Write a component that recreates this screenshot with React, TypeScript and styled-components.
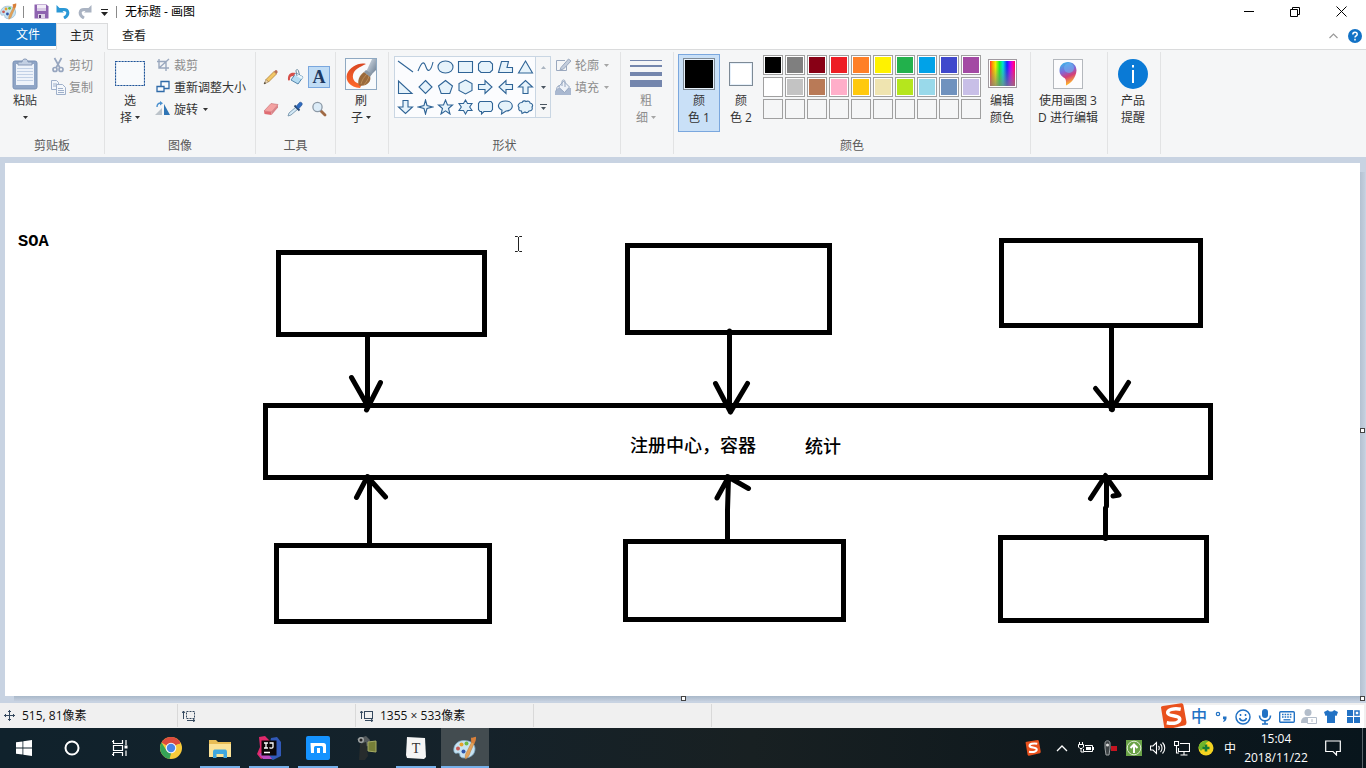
import React from "react";
import styled, { createGlobalStyle, css } from "styled-components";

const GlobalStyle = createGlobalStyle`
  *, *::before, *::after { box-sizing: border-box; }
  html, body { margin: 0; height: 100%; }
  body {
    font-family: "Open Sans", "Noto Sans CJK SC", sans-serif;
    font-size: 12px;
    line-height: 17px;
    color: #222;
  }
  #root { height: 100%; }
  button {
    font: inherit;
    color: inherit;
    background: none;
    border: 0;
    padding: 0;
    margin: 0;
  }
  svg { display: block; flex: none; }
`;

const Screen = styled.div`
  display: flex;
  flex-direction: column;
  min-height: 100%;
  overflow: hidden;
`;

/* ---------- title bar ---------- */

const TitleBar = styled.header`
  display: flex;
  align-items: center;
  height: 23px;
  background: #fff;
`;

const QuickAccess = styled.div`
  display: flex;
  align-items: center;
  gap: 4px;
`;

const QuickButton = styled.button<{ $narrow?: boolean }>`
  display: flex;
  align-items: center;
  justify-content: center;
  width: ${(p) => (p.$narrow ? 12 : 18)}px;
  height: 20px;
`;

const TitleDivider = styled.span`
  width: 1px;
  height: 12px;
  margin: 0 8px 0 2px;
  background: #8a8a8a;
`;

const Title = styled.h1`
  margin: 0;
  font-size: 12px;
  font-weight: 400;
  color: #000;
`;

const WindowButtons = styled.div`
  display: flex;
  margin-left: auto;
  padding-right: 2px;
`;

const WindowButton = styled.button`
  display: flex;
  align-items: center;
  justify-content: center;
  width: 46px;
  height: 22px;
`;

/* ---------- tabs ---------- */

const TabBar = styled.nav`
  display: flex;
  height: 27px;
  background: #fff;
  border-bottom: 1px solid #dadbdc;
`;

const FileTab = styled.button`
  width: 56px;
  height: 23px;
  color: #fff;
  background: #1979ca;
`;

const Tab = styled.button<{ $active?: boolean }>`
  width: 52px;
  height: 27px;
  padding-bottom: 3px;
  border: 1px solid transparent;
  ${(p) =>
    p.$active &&
    css`
      background: #f5f6f7;
      border-color: #dadbdc #dadbdc transparent;
    `}
`;

const TabTools = styled.div`
  display: flex;
  align-items: center;
  gap: 10px;
  margin-left: auto;
  padding-right: 4px;
`;

/* ---------- ribbon ---------- */

const Ribbon = styled.section`
  display: flex;
  height: 107px;
  padding: 2px 0 3px;
  background: #f5f6f7;
`;

const GroupBox = styled.div<{ $width: number }>`
  display: flex;
  flex-direction: column;
  flex: none;
  width: ${(p) => p.$width}px;
  padding-top: 2px;
  border-right: 1px solid #e2e3e4;
`;

const GroupBody = styled.div`
  display: flex;
  flex: 1;
  align-items: flex-start;
  padding: 0 4px;
`;

const GroupLabel = styled.div`
  height: 17px;
  text-align: center;
  color: #5a5a5a;
`;

const BigButton = styled.button<{ $wide?: boolean; $selected?: boolean; $disabled?: boolean }>`
  display: flex;
  flex-direction: column;
  align-items: center;
  flex: none;
  width: ${(p) => (p.$wide ? 66 : 42)}px;
  height: 78px;
  border: 1px solid transparent;
  white-space: nowrap;
  color: ${(p) => (p.$disabled ? "#8d8d8d" : "#333")};
  ${(p) =>
    p.$selected &&
    css`
      background: #c9e0f7;
      border-color: #7aa7de;
    `}
`;

const BigIcon = styled.span`
  display: flex;
  align-items: center;
  justify-content: center;
  height: 37px;
  flex: none;
`;

const ButtonLine = styled.span`
  display: flex;
  align-items: center;
  justify-content: center;
  gap: 3px;
  height: 17px;
`;

const SmallColumn = styled.div`
  display: flex;
  flex-direction: column;
  align-items: flex-start;
  padding-left: 4px;
`;

const SmallButton = styled.button<{ $disabled?: boolean }>`
  display: flex;
  align-items: center;
  gap: 3px;
  height: 22px;
  white-space: nowrap;
  color: ${(p) => (p.$disabled ? "#8d8d8d" : "#333")};
`;

const SmallCaret = styled.span`
  padding-left: 2px;
`;

const ToolGrid = styled.div`
  display: grid;
  grid-template-columns: repeat(3, 22px);
  grid-auto-rows: 22px;
  gap: 10px 2px;
  padding-top: 12px;
`;

const ToolButton = styled.button<{ $selected?: boolean }>`
  display: flex;
  align-items: center;
  justify-content: center;
  border: 1px solid ${(p) => (p.$selected ? "#7aa7de" : "transparent")};
  background: ${(p) => (p.$selected ? "#c0dcf5" : "none")};
`;

const LetterTool = styled.span`
  font-family: "Liberation Serif", serif;
  font-size: 18px;
  line-height: 20px;
  font-weight: 700;
  color: #1d3a63;
`;

const Gallery = styled.div`
  display: flex;
  margin: 2px 4px 0 1px;
  border: 1px solid #c9d6e3;
  background: #fbfcfe;
`;

const ShapeGrid = styled.div`
  display: grid;
  grid-template-columns: repeat(7, 20px);
  grid-auto-rows: 20px;
`;

const ShapeButton = styled.button`
  display: flex;
  align-items: center;
  justify-content: center;
`;

const GalleryScroll = styled.div`
  display: flex;
  flex-direction: column;
  width: 15px;
  border-left: 1px solid #c9d6e3;
  background: #f5f6f7;
`;

const ScrollButton = styled.button`
  display: flex;
  flex: 1;
  align-items: center;
  justify-content: center;
`;

const Swatch = styled.span<{ $color: string; $large?: boolean }>`
  width: ${(p) => (p.$large ? 32 : 24)}px;
  height: ${(p) => (p.$large ? 32 : 24)}px;
  border: 1px solid #7d8a96;
  background: ${(p) => p.$color};
  box-shadow: inset 0 0 0 1px #e6f0fa;
`;

const Palette = styled.div`
  display: grid;
  grid-template-columns: repeat(10, 20px);
  grid-auto-rows: 20px;
  gap: 2px;
  padding: 1px 0 0 1px;
`;

const PaletteColor = styled.button<{ $color?: string }>`
  border: 1px solid #a0a0a0;
  background: ${(p) => p.$color || "#f5f6f7"};
  box-shadow: inset 0 0 0 1px ${(p) => (p.$color ? "#fff" : "#f5f6f7")};
`;

const Spectrum = styled.span`
  width: 29px;
  height: 29px;
  border: 1px solid #a09aa0;
  padding: 1px;
  background:
    linear-gradient(to bottom, rgba(128, 128, 128, 0) 20%, rgba(128, 128, 128, 0.75)) content-box,
    linear-gradient(to right, #f33, #f90 10%, #ee0 22%, #1e3 38%, #0dd 52%, #12f 68%, #a0f 80%, #f0a 92%, #f05) content-box,
    #fff;
`;

/* ---------- workspace ---------- */

const Workspace = styled.main`
  display: flex;
  flex: 1;
  padding: 6px 6px 7px 5px;
  background: #c8d3e2;
`;

const Paper = styled.div`
  position: relative;
  flex: 1;
  background: #fff;
  &::before {
    content: "";
    position: absolute;
    left: 9px;
    right: -4px;
    bottom: -5px;
    height: 5px;
    background: linear-gradient(#a9b8c9, #c4cfde);
  }
  &::after {
    content: "";
    position: absolute;
    top: 9px;
    bottom: 0;
    right: -5px;
    width: 5px;
    background: linear-gradient(to right, #b4c1d1, #c4cfde);
  }
`;

const Drawing = styled.svg`
  position: absolute;
  inset: 0;
  width: 100%;
  height: 100%;
`;

const Handle = styled.span<{ $edge: "right" | "bottom" | "corner" }>`
  position: absolute;
  z-index: 1;
  width: 5px;
  height: 5px;
  background: #fff;
  border: 1px solid #444;
  right: ${(p) => (p.$edge === "bottom" ? "calc(50% - 3px)" : "-5px")};
  bottom: ${(p) => (p.$edge === "right" ? "calc(50% - 3px)" : "-5px")};
`;

/* ---------- status bar ---------- */

const StatusBar = styled.footer`
  display: flex;
  align-items: stretch;
  height: 25px;
  background: #f0f0f0;
  color: #111;
`;

const StatusCell = styled.div`
  display: flex;
  align-items: center;
  gap: 6px;
  width: 178px;
  padding-left: 4px;
  margin: 1px 0;
  border-right: 1px solid #d9d9d9;
`;

const ImeBar = styled.div`
  display: flex;
  align-items: center;
  margin: 2px 2px 0 auto;
  background: linear-gradient(to right, transparent 20px, #fff 20px);
`;

const ImeButton = styled.button<{ $logo?: boolean }>`
  display: flex;
  align-items: center;
  justify-content: center;
  width: ${(p) => (p.$logo ? 30 : 22)}px;
  height: 23px;
  font-size: 16px;
  font-weight: 500;
  color: #2272c4;
`;

/* ---------- taskbar ---------- */

const Taskbar = styled.nav`
  display: flex;
  height: 40px;
  background: linear-gradient(to right, #10222c, #15222a 35%, #182022 55%, #0e181d 80%, #08151c);
  color: #fff;
`;

const TaskGroup = styled.div<{ $gap: number }>`
  display: flex;
  gap: ${(p) => p.$gap}px;
  margin-right: 3px;
`;

const TaskButton = styled.button<{ $open?: boolean; $active?: boolean }>`
  display: flex;
  align-items: center;
  justify-content: center;
  width: 48px;
  height: 40px;
  background: ${(p) => (p.$active ? "#434c50" : "none")};
  ${(p) =>
    (p.$open || p.$active) &&
    css`
      background-image: linear-gradient(#76b0ea, #76b0ea);
      background-repeat: no-repeat;
      background-position: bottom center;
      background-size: ${p.$active ? "48px" : "40px"} 2px;
    `}
`;

const Tray = styled.div`
  display: flex;
  align-items: center;
  margin-left: auto;
`;

const TrayButton = styled.button<{ $first?: boolean }>`
  display: flex;
  align-items: center;
  justify-content: center;
  width: 24px;
  height: 40px;
  margin-right: ${(p) => (p.$first ? 5 : 0)}px;
`;

const Clock = styled.button`
  width: 68px;
  height: 40px;
  text-align: center;
  line-height: 19px;
  white-space: nowrap;
`;

const Notifications = styled(TrayButton)`
  width: 46px;
`;

const ShowDesktop = styled.button`
  width: 4px;
  height: 40px;
  margin-left: 6px;
  border-left: 1px solid #59646a;
`;

/* ---------- icons ---------- */

const Caret = ({ up, color = "#333" }: { up?: boolean; color?: string }) => (
  <svg width="5" height="3" viewBox="0 0 5 3" fill={color}>
    <path d={up ? "M0 3h5L2.500 0z" : "M0 0h5L2.500 3z"} />
  </svg>
);

const PaintIcon = ({ size = 17 }: { size?: number }) => (
  <svg width={size} height={size} viewBox="0 0 24 24">
    <path
      d="M11 4.500C4.500 4.500.5 9 .8 14.500c.2 3 2.200 3 3.600 2.600 1.500-.4 2.500.4 2.400 2 0 1.700 1.500 3 5.200 2.900 6.500-.2 10-4.200 10-9.300 0-5-4.800-8.200-11-8.200z"
      fill="#c7e3f2" stroke="#7fa9c4" strokeWidth=".8"
    />
    <circle cx="5" cy="12.500" r="2" fill="#c95a55" />
    <circle cx="8.500" cy="8.500" r="2" fill="#e6a22b" />
    <circle cx="13.500" cy="7.500" r="2" fill="#6dbb45" />
    <circle cx="10.500" cy="15.500" r="2" fill="#2f55a8" />
    <path d="M12.500 23c-.8-3 .2-6 2-8.500L19 5.500l2.500 1.200-4.200 9.300c-.8 3-2 5.500-4.800 7z" fill="#e2a25a" stroke="#b97a3a" strokeWidth=".5" />
    <path d="M18 1.500c2 .8 3-.8 5-.8.2 3-.5 5-2 7l-2.800-1.400z" fill="#d9803a" />
  </svg>
);

const SaveIcon = () => (
  <svg width="15" height="15" viewBox="0 0 15 15">
    <path d="M.5.5h12l2 2v12H.5z" fill="#8e63b0" />
    <path d="M3 1h9v6H3z" fill="#f2ecf7" />
    <path d="M3 4h9v3H3z" fill="#d9cbe6" />
    <path d="M4 10h7v4.500H4z" fill="#dcd3e6" />
    <path d="M5 11h2v3H5z" fill="#5d3f7a" />
  </svg>
);

const UndoIcon = ({ redo }: { redo?: boolean }) => (
  <svg width="14" height="14" viewBox="0 0 14 14">
    <g transform={redo ? "matrix(-1 0 0 1 14 0)" : undefined}>
      <path d="M2 4.500h5c6-.5 6.500 5.500 1 8.500" fill="none" stroke={redo ? "#aab3c2" : "#2b98d6"} strokeWidth="3" />
      <path d="M.5 0v7.500H8z" fill={redo ? "#aab3c2" : "#2b98d6"} />
    </g>
  </svg>
);

const PasteIcon = () => (
  <svg width="26" height="32" viewBox="0 0 26 32">
    <rect x="1" y="3" width="24" height="28" rx="2" fill="#8fa5c6" stroke="#7b92b6" />
    <rect x="4" y="6" width="18" height="21" fill="#eef3fa" />
    <path d="M5 10.500h16M5 13.500h16M5 16.500h16M5 19.500h16M5 22.500h16" stroke="#c2d1e6" />
    <path d="M6 7V4h4c0-4 6-4 6 0h4v3z" fill="#c3d0e3" stroke="#8699b7" />
  </svg>
);

const CutIcon = () => (
  <svg width="16" height="16" viewBox="0 0 16 16" fill="none" stroke="#97a6bf" strokeWidth="1.700">
    <path d="M4.500 1l5.500 10M11.500 1L6 11" />
    <circle cx="5" cy="12.500" r="2" />
    <circle cx="11" cy="12.500" r="2" />
  </svg>
);

const CopyIcon = () => (
  <svg width="16" height="16" viewBox="0 0 16 16" fill="#f4f7fb" stroke="#9fb0ca">
    <path d="M1.500 1.500h5l2 2v7h-7z" />
    <path d="M3 5h4M3 7h4" />
    <path d="M6.500 5.500h6l3 3v7h-9z" />
    <path d="M8 9.500h5M8 11.500h6M8 13.500h6" />
  </svg>
);

const SelectIcon = () => (
  <svg width="30" height="25" viewBox="0 0 30 25">
    <rect x=".5" y=".5" width="29" height="24" fill="#f8fafc" stroke="#1f5499" strokeWidth="1.200" strokeDasharray="2.200 .8" />
  </svg>
);

const CropIcon = () => (
  <svg width="16" height="16" viewBox="0 0 16 16" fill="none" stroke="#9aa8be" strokeWidth="1.400">
    <path d="M4 2v9h10M2 4.500h9V14M4 11L14 2" />
  </svg>
);

const ResizeIcon = () => (
  <svg width="16" height="16" viewBox="0 0 16 16" fill="#f8fbfe" stroke="#2f6aa8" strokeWidth="1.300">
    <path d="M6 2.500h8v7H6z" />
    <path d="M2 7.500h7v5H2z" />
  </svg>
);

const RotateIcon = () => (
  <svg width="16" height="16" viewBox="0 0 16 16">
    <path d="M7 7v7H0z" fill="#bcc3ca" />
    <path d="M9 3v11h6z" fill="#2f75b5" />
    <path d="M2 6c0-3 2-4 4-4" fill="none" stroke="#4a90cf" strokeWidth="1.400" />
    <path d="M5 0l3 2.200L5 4.500z" fill="#4a90cf" />
  </svg>
);

const PencilIcon = () => (
  <svg width="16" height="16" viewBox="0 0 16 16">
    <path d="M3 10.500L11 2.500l2.500 2.500-8 8z" fill="#f2c766" stroke="#a9792e" strokeWidth=".7" />
    <path d="M11 2.500l1.500-1.300c1-.5 2.500 1 2 2L13.500 5z" fill="#b86f55" />
    <path d="M3 10.500L1 15l4.500-2z" fill="#e9d4b0" stroke="#8b6a3e" strokeWidth=".5" />
    <path d="M1 15l.8-2 1.200 1.200z" fill="#222" />
  </svg>
);

const BucketIcon = ({ dim }: { dim?: boolean }) => (
  <svg width="17" height="16" viewBox="0 0 17 16">
    {dim ? (
      <>
        <path d="M0 12l3-3h13v7H0z" fill="#a9b8d0" />
        <path d="M8.500 2l6 6-5 5.500-6-5.500z" fill="#eef2f8" stroke="#94a5bf" />
        <path d="M7 7V2.500c0-2 3-2 3 0V8" fill="none" stroke="#94a5bf" />
        <path d="M5 7C3 6 1.500 8 1.500 11.500" fill="none" stroke="#94a5bf" />
      </>
    ) : (
      <>
        <path d="M9 4l7 4-5 7-7-4z" fill="#b5dcf2" stroke="#5586ac" />
        <path d="M9 4l7 4-1.500 2-7-4z" fill="#e8f5fc" />
        <path d="M10 7l-1-5c0-2 2-2 2.500 0l1 4" fill="none" stroke="#6f8ca2" />
        <path d="M8.500 4C4 3 .5 4.500 1 11c1 1 2 .5 2-1 0-2 1-3 3.500-3z" fill="#d6504a" />
      </>
    )}
  </svg>
);

const EraserIcon = () => (
  <svg width="16" height="16" viewBox="0 0 16 16">
    <path d="M1 10L8 2.500l7 1L8.500 11z" fill="#f4a2a2" stroke="#c46a6e" strokeWidth=".6" />
    <path d="M1 10l7.500 1v3L1.500 13z" fill="#e06c72" />
    <path d="M8.500 11L15 3.500v3L8.500 14z" fill="#d88388" />
  </svg>
);

const PickerIcon = () => (
  <svg width="16" height="16" viewBox="0 0 16 16">
    <path d="M9 6l2 2-7 6-3 1 1-3z" fill="#d4e9f6" stroke="#6b8ba5" strokeWidth=".8" />
    <path d="M7.500 4.500l5 5" stroke="#27456e" strokeWidth="1.800" />
    <path d="M9 5.500L12.500 1.500c1.500-1 3.500.8 2.500 2.500L11.500 8z" fill="#2f6cc0" stroke="#234f91" strokeWidth=".6" />
  </svg>
);

const ZoomIcon = () => (
  <svg width="16" height="16" viewBox="0 0 16 16">
    <path d="M9.500 9.500L14 14" stroke="#a06a45" strokeWidth="2.800" strokeLinecap="round" />
    <circle cx="6.500" cy="6" r="4.600" fill="#dcecf8" stroke="#8c99a6" strokeWidth="1.300" />
  </svg>
);

const BrushIcon = () => (
  <svg width="32" height="32" viewBox="0 0 32 32">
    <defs>
      <linearGradient id="handle" x1="0" y1="0" x2="1" y2="1">
        <stop offset="0" stopColor="#dfe7ef" />
        <stop offset="1" stopColor="#66788c" />
      </linearGradient>
      <linearGradient id="stroke" x1="0" y1="0" x2="0" y2="1">
        <stop offset="0" stopColor="#d94722" />
        <stop offset="1" stopColor="#ff6a2c" />
      </linearGradient>
    </defs>
    <rect x=".5" y=".5" width="31" height="31" fill="#f8fafc" stroke="#8fa9c2" />
    <path d="M21 6C14 4 5 9 2 16c-2 7 3 13 13 14l2-4c-6 0-10-4-9-9C9 11 15 9 21 6z" fill="url(#stroke)" />
    <path d="M27 1h4v11l-6 6-4-4z" fill="url(#handle)" />
    <path d="M19 14l6 4c2 6-4 11-11 9.500-2-4 0-10 5-13.500z" fill="#9a6a3c" />
    <path d="M16 26c1-4 3-7 6-10M19 27c2-3 4-5 5-9" fill="none" stroke="#c4935c" strokeWidth=".8" />
    <path d="M19 14l2-2 6 4-2 3z" fill="#8b98a5" />
  </svg>
);

const OutlineIcon = () => (
  <svg width="17" height="16" viewBox="0 0 17 16" fill="none" stroke="#9aa8be">
    <path d="M10 3.500H1.500v10h10V9" />
    <path d="M6 10.500L13.500 2 16 4 8.500 12 5 13z" fill="#c3cddc" />
  </svg>
);

const ThicknessIcon = () => (
  <svg width="32" height="28" viewBox="0 0 32 28" fill="#7486ad">
    <path d="M0 0h32v1H0zM0 5h32v2H0zM0 12h32v4H0zM0 20h32v7H0z" />
  </svg>
);

const Paint3DIcon = () => (
  <svg width="30" height="30" viewBox="0 0 30 30">
    <defs>
      <linearGradient id="drop" x1="0" y1="0" x2=".3" y2="1">
        <stop offset="0" stopColor="#2fc4ee" />
        <stop offset=".45" stopColor="#8069d8" />
        <stop offset=".7" stopColor="#d33e78" />
        <stop offset="1" stopColor="#ffb52e" />
      </linearGradient>
    </defs>
    <rect x=".5" y=".5" width="29" height="29" fill="#fcfcfd" stroke="#b4b8bd" />
    <path d="M15 3c-5 0-8.500 3.500-8.500 8.500 0 4 2.500 6 5 7.500 2 1.500 1.500 5 1.500 7.500 5-2 10-8 10.500-15C23.500 6.500 20 3 15 3z" fill="url(#drop)" />
    <circle cx="16" cy="9" r="5" fill="#6bb8f2" opacity=".6" />
  </svg>
);

const AlertIcon = () => (
  <svg width="30" height="30" viewBox="0 0 30 30">
    <circle cx="15" cy="15" r="15" fill="#0a7ad6" />
    <path d="M14 11h2v13h-2zM14 6h2v2.500h-2z" fill="#fff" />
  </svg>
);

const shapePaths: [string, string][] = [
  ["直线", "M1 2l15 11"],
  ["曲线", "M1 12C5 2 7 2 9 8s5 4 7-5"],
  ["椭圆形", "M8.500 2c10 0 10 12 0 12s-10-12 0-12z"],
  ["矩形", "M1.500 2.500h14v11h-14z"],
  ["圆角矩形", "M4 2.500h9l2.500 2.500v6L13 13.500H4L1.500 11V5z"],
  ["多边形", "M4.500 2.500h7L10 8.500h5.500v5h-14z"],
  ["三角形", "M8.500 2l7 12h-14z"],
  ["直角三角形", "M1.500 2v12.500H15z"],
  ["菱形", "M8.500 1.500l6.500 6.500-6.500 6.500L2 8z"],
  ["五边形", "M8.500 1.500l7 5.500-2.700 7.500H4.200L1.500 7z"],
  ["六边形", "M8.500 1l6.500 3.500v7L8.500 15 2 11.500v-7z"],
  ["右箭头", "M1.500 5.500H8v-4l7 6.500-7 6.500v-4H1.500z"],
  ["左箭头", "M15.500 5.500H9v-4L2 8l7 6.500v-4h6.500z"],
  ["向上箭头", "M6 14.500V8H1.500l7-6.500 7 6.500H11v6.500z"],
  ["向下箭头", "M6 1.500V8H1.500l7 6.500 7-6.500H11V1.500z"],
  ["四角星形", "M8.500 1l1.500 5.500L15.500 8 10 9.500 8.500 15 7 9.500 1.500 8 7 6.500z"],
  ["五角星形", "M8.500 1l2 5h5l-4 3.500 1.500 5.500-4.500-3.200L4 15l1.500-5.500L1.500 6h5z"],
  ["六角星形", "M8.500 1l2 3.500H15L12.700 8l2.300 3.500h-4.500l-2 3.500-2-3.500H2L4.300 8 2 4.500h4.500z"],
  ["圆角矩形标注", "M3 2.500h11l1.500 2v6l-1.500 2H7L4.500 15v-2.500H3l-1.500-2v-6z"],
  ["椭圆形标注", "M8.500 2C17.500 2 17.500 12 9 12l-4.500 3 .5-3.800C-1 8.500 1 2 8.500 2z"],
  ["云形标注", "M5 3.500c1-2 3-2 4-1 2-1 4 0 4 1.500 3 .5 3 3 2 4 1 3-1 4-3 4-1 2-3 2-4 1l-3 1.500-.5-2.500c-3 0-3-2-2.500-3.500C0 6.500 2 3.500 5 3.500z"],
];

const ShapeIcon = ({ d, open }: { d: string; open?: boolean }) => (
  <svg width="17" height="16" viewBox="0 0 17 16" fill={open ? "none" : "#e6f3fb"} stroke="#2f6496" strokeWidth="1.100">
    <path d={d} />
  </svg>
);

const SogouLogo = ({ size }: { size: number }) => (
  <svg width={size} height={size} viewBox="0 0 28 28">
    <path d="M1 4.500Q1 3.500 3 3L22 .2Q24 0 24.300 2L27.500 20Q27.500 22.500 26 23L7 27.500Q5 27.500 4.500 26z" fill="#e9511d" />
    <path d="M21.500 6.500C14 5 7.500 7 8 10.500c.5 3.500 12 2 12.500 6 .3 4-6 5.500-13.500 4" fill="none" stroke="#fff" strokeWidth="3.600" />
  </svg>
);

/* ---------- ribbon pieces ---------- */

const Group = ({ width, label, children }: { width: number; label?: string; children: React.ReactNode }) => (
  <GroupBox $width={width}>
    <GroupBody>{children}</GroupBody>
    <GroupLabel>{label}</GroupLabel>
  </GroupBox>
);

const Big = ({
  icon, lines, caret, ...rest
}: {
  icon: React.ReactNode; lines: [string, string]; caret?: boolean;
  $wide?: boolean; $selected?: boolean; $disabled?: boolean;
}) => (
  <BigButton type="button" {...rest}>
    <BigIcon>{icon}</BigIcon>
    <ButtonLine>{lines[0]}</ButtonLine>
    <ButtonLine>
      {lines[1]}
      {caret && <Caret color={rest.$disabled ? "#a5a5a5" : "#333"} />}
    </ButtonLine>
  </BigButton>
);

const Small = ({
  icon, label, disabled, caret,
}: { icon: React.ReactNode; label: string; disabled?: boolean; caret?: boolean }) => (
  <SmallButton type="button" $disabled={disabled}>
    {icon}
    {label}
    {caret && <SmallCaret><Caret color={disabled ? "#a5a5a5" : "#333"} /></SmallCaret>}
  </SmallButton>
);

const palette: (string | undefined)[] = [
  "#000000", "#7f7f7f", "#880015", "#ed1c24", "#ff7f27", "#fff200", "#22b14c", "#00a2e8", "#3f48cc", "#a349a4",
  "#ffffff", "#c3c3c3", "#b97a57", "#ffaec9", "#ffc90e", "#efe4b0", "#b5e61d", "#99d9ea", "#7092be", "#c8bfe7",
  ...Array<undefined>(10).fill(undefined),
];

/* ---------- the drawing on the canvas ---------- */

const PEN = 5;

const Box = ({ x1, y1, x2, y2 }: { x1: number; y1: number; x2: number; y2: number }) => (
  <rect x={x1 + PEN / 2} y={y1 + PEN / 2} width={x2 - x1 - PEN} height={y2 - y1 - PEN} />
);

const SoaDiagram = () => (
  <Drawing>
    <g transform="translate(-5 -163)">
      <g fill="none" stroke="#000" strokeWidth={PEN}>
        <Box x1={276} y1={250} x2={487} y2={337} />
        <Box x1={625} y1={243} x2={832} y2={335} />
        <Box x1={999} y1={238} x2={1203} y2={328} />
        <Box x1={263} y1={403} x2={1213} y2={480} />
        <Box x1={274} y1={543} x2={492} y2={624} />
        <Box x1={623} y1={539} x2={846} y2={622} />
        <Box x1={998} y1={535} x2={1209} y2={623} />
      </g>
      <g fill="none" stroke="#000" strokeWidth={PEN} strokeLinecap="round" strokeLinejoin="round">
        <path d="M367.500 335v70M351.500 377.500l16.500 29M380.500 382.500L366.500 410" />
        <path d="M729.500 331v78M715.500 383.500L730.500 412M747.500 383.500L730.500 412" />
        <path d="M1111.500 326v80M1095.500 388.500l17 21M1128.500 382.500l-17 27" />
        <path d="M369.500 544v-64M367.500 476.500l-11 21M368.500 478l17 19" />
        <path d="M727.500 541v-31l1-32M728 478l-11 20M727.500 476.500l21 12" />
        <path d="M1105.500 538.500V508M1106.500 506v-28M1105.500 475.500l-15 23M1106.500 477.500l12.500 17.500-6 1" />
      </g>
      <g fill="#000">
        <text x="18" y="246" fontFamily="Liberation Mono, monospace" fontSize="17" fontWeight="700">SOA</text>
        <text x="630" y="452" fontFamily="Noto Sans CJK SC, sans-serif" fontSize="18" fontWeight="500">注册中心，容器</text>
        <text x="805" y="453" fontFamily="Noto Sans CJK SC, sans-serif" fontSize="18" fontWeight="500">统计</text>
      </g>
      <path d="M515 236.500h2.500l1 1 1-1h2.500M518.500 237v14M515 251.500h2.500l1-1 1 1h2.500" fill="none" stroke="#222" />
    </g>
  </Drawing>
);

export default function App() {
  return (
    <Screen>
      <GlobalStyle />
      <TitleBar>
        <QuickAccess>
          <PaintIcon />
          <TitleDivider />
        </QuickAccess>
        <QuickAccess>
          <QuickButton type="button" aria-label="保存"><SaveIcon /></QuickButton>
          <QuickButton type="button" aria-label="撤消"><UndoIcon /></QuickButton>
          <QuickButton type="button" aria-label="重做"><UndoIcon redo /></QuickButton>
          <QuickButton type="button" $narrow aria-label="自定义快速访问工具栏">
            <svg width="7" height="8" viewBox="0 0 7 8" fill="#222"><path d="M0 1h7v1H0zM0 4h7L3.500 8z" /></svg>
          </QuickButton>
          <TitleDivider />
        </QuickAccess>
        <Title>无标题 - 画图</Title>
        <WindowButtons>
          <WindowButton type="button" aria-label="最小化">
            <svg width="10" height="10" viewBox="0 0 10 10"><path d="M0 4.500h10" stroke="#000" /></svg>
          </WindowButton>
          <WindowButton type="button" aria-label="向下还原">
            <svg width="10" height="10" viewBox="0 0 10 10" fill="none" stroke="#000"><path d="M.5 2.500h7v7h-7zM2.500 2V.5h7v7H8" /></svg>
          </WindowButton>
          <WindowButton type="button" aria-label="关闭">
            <svg width="11" height="11" viewBox="0 0 11 11"><path d="M.5.5l10 10M10.500.5l-10 10" stroke="#000" /></svg>
          </WindowButton>
        </WindowButtons>
      </TitleBar>

      <TabBar>
        <FileTab type="button">文件</FileTab>
        <Tab type="button" $active>主页</Tab>
        <Tab type="button">查看</Tab>
        <TabTools>
          <button type="button" aria-label="折叠功能区">
            <svg width="9" height="6" viewBox="0 0 9 6"><path d="M.5 5l4-4 4 4" fill="none" stroke="#9a9a9a" strokeWidth="1.200" /></svg>
          </button>
          <button type="button" aria-label="帮助">
            <svg width="14" height="14" viewBox="0 0 14 14">
              <circle cx="7" cy="7" r="7" fill="#1272c6" />
              <path d="M4.800 5.500c0-3 4.400-3 4.400-.3 0 1.600-2.200 1.600-2.200 3.300M7 9.800v1.600" fill="none" stroke="#fff" strokeWidth="1.500" />
            </svg>
          </button>
        </TabTools>
      </TabBar>

      <Ribbon>
        <Group width={105} label="剪贴板">
          <Big icon={<PasteIcon />} lines={["粘贴", ""]} caret />
          <SmallColumn>
            <Small icon={<CutIcon />} label="剪切" disabled />
            <Small icon={<CopyIcon />} label="复制" disabled />
          </SmallColumn>
        </Group>
        <Group width={151} label="图像">
          <Big icon={<SelectIcon />} lines={["选", "择"]} caret />
          <SmallColumn>
            <Small icon={<CropIcon />} label="裁剪" disabled />
            <Small icon={<ResizeIcon />} label="重新调整大小" />
            <Small icon={<RotateIcon />} label="旋转" caret />
          </SmallColumn>
        </Group>
        <Group width={80} label="工具">
          <ToolGrid>
            <ToolButton type="button" aria-label="铅笔"><PencilIcon /></ToolButton>
            <ToolButton type="button" aria-label="用颜色填充"><BucketIcon /></ToolButton>
            <ToolButton type="button" $selected aria-label="文本"><LetterTool>A</LetterTool></ToolButton>
            <ToolButton type="button" aria-label="橡皮擦"><EraserIcon /></ToolButton>
            <ToolButton type="button" aria-label="颜色选取器"><PickerIcon /></ToolButton>
            <ToolButton type="button" aria-label="放大镜"><ZoomIcon /></ToolButton>
          </ToolGrid>
        </Group>
        <Group width={53}>
          <Big icon={<BrushIcon />} lines={["刷", "子"]} caret />
        </Group>
        <Group width={232} label="形状">
          <Gallery>
            <ShapeGrid>
              {shapePaths.map(([name, d], i) => (
                <ShapeButton type="button" key={name} aria-label={name}>
                  <ShapeIcon d={d} open={i < 2} />
                </ShapeButton>
              ))}
            </ShapeGrid>
            <GalleryScroll>
              <ScrollButton type="button" aria-label="上一行"><Caret up color="#aab4c0" /></ScrollButton>
              <ScrollButton type="button" aria-label="下一行"><Caret color="#4a5560" /></ScrollButton>
              <ScrollButton type="button" aria-label="更多形状">
                <svg width="7" height="7" viewBox="0 0 7 7" fill="#4a5560"><path d="M0 0h7v1H0zM1 3h5L3.500 6z" /></svg>
              </ScrollButton>
            </GalleryScroll>
          </Gallery>
          <div>
            <Small icon={<OutlineIcon />} label="轮廓" disabled caret />
            <Small icon={<BucketIcon dim />} label="填充" disabled caret />
          </div>
        </Group>
        <Group width={53}>
          <Big icon={<ThicknessIcon />} lines={["粗", "细"]} caret $disabled />
        </Group>
        <Group width={357} label="颜色">
          <Big icon={<Swatch $color="#000" $large />} lines={["颜", "色 1"]} $selected />
          <Big icon={<Swatch $color="#fff" />} lines={["颜", "色 2"]} />
          <Palette>
            {palette.map((color, i) => (
              <PaletteColor type="button" key={i} $color={color} aria-label={color ?? "自定义颜色"} />
            ))}
          </Palette>
          <Big icon={<Spectrum />} lines={["编辑", "颜色"]} />
        </Group>
        <Group width={77}>
          <Big icon={<Paint3DIcon />} lines={["使用画图 3", "D 进行编辑"]} $wide />
        </Group>
        <Group width={53}>
          <Big icon={<AlertIcon />} lines={["产品", "提醒"]} />
        </Group>
      </Ribbon>

      <Workspace>
        <Paper>
          <SoaDiagram />
          <Handle $edge="right" />
          <Handle $edge="bottom" />
          <Handle $edge="corner" />
        </Paper>
      </Workspace>

      <StatusBar>
        <StatusCell>
          <svg width="12" height="12" viewBox="0 0 12 12" fill="none" stroke="#34485e">
            <path d="M0 5.500h11M5.500 0v11M2 4L.5 5.500 2 7M9 4l1.500 1.500L9 7M4 2L5.500.5 7 2M4 9l1.500 1.500L7 9" />
          </svg>
          515, 81像素
        </StatusCell>
        <StatusCell>
          <svg width="14" height="12" viewBox="0 0 14 12" fill="none" stroke="#34485e">
            <path d="M1.500 1v8M0 3l1.500-2L3 3M5 10.500h8M11 9l2 1.500-2 1.500" />
            <rect x="4.500" y="1.500" width="8" height="7" strokeDasharray="2 1" />
          </svg>
        </StatusCell>
        <StatusCell>
          <svg width="14" height="12" viewBox="0 0 14 12" fill="none" stroke="#34485e">
            <path d="M1.500 1v8M0 3l1.500-2L3 3M5 10.500h8M11 9l2 1.500-2 1.500" />
            <rect x="4.500" y="1.500" width="8" height="7" />
          </svg>
          1355 × 533像素
        </StatusCell>
        <StatusCell />
        <ImeBar>
          <ImeButton type="button" $logo aria-label="搜狗输入法"><SogouLogo size={27} /></ImeButton>
          <ImeButton type="button">中</ImeButton>
          <ImeButton type="button" aria-label="中文标点">
            <svg width="12" height="12" viewBox="0 0 12 12" fill="#2272c4">
              <circle cx="3" cy="3" r="1.700" fill="none" stroke="#2272c4" strokeWidth="1.200" />
              <path d="M8 5.500h3.500c.5 3-1 5-3 5.500l-.5-1c1-.5 1.200-1 1.200-1.800H8z" />
            </svg>
          </ImeButton>
          <ImeButton type="button" aria-label="表情">
            <svg width="16" height="16" viewBox="0 0 16 16" fill="none" stroke="#2272c4" strokeWidth="1.500">
              <circle cx="8" cy="8" r="7" />
              <path d="M4.500 9c1 3.500 6 3.500 7 0M5.500 5v2M10.500 5v2" />
            </svg>
          </ImeButton>
          <ImeButton type="button" aria-label="语音">
            <svg width="14" height="16" viewBox="0 0 14 16" fill="none" stroke="#2272c4" strokeWidth="1.600">
              <rect x="4" y="0" width="6" height="9" rx="3" fill="#2272c4" stroke="none" />
              <path d="M1.500 6.500c0 7 11 7 11 0M7 12v3M4 15h6" />
            </svg>
          </ImeButton>
          <ImeButton type="button" aria-label="软键盘">
            <svg width="16" height="12" viewBox="0 0 16 12">
              <rect x=".7" y=".7" width="14.600" height="10.600" rx="1" fill="#fff" stroke="#2272c4" strokeWidth="1.400" />
              <path d="M3 3.500h10M3 6h10" stroke="#2272c4" strokeWidth="1.500" strokeDasharray="1.600 1" />
              <path d="M4.500 8.800h7" stroke="#2272c4" strokeWidth="1.300" />
            </svg>
          </ImeButton>
          <ImeButton type="button" aria-label="用户">
            <svg width="16" height="15" viewBox="0 0 16 15">
              <circle cx="7" cy="3.500" r="3.500" fill="#b3bdca" />
              <path d="M0 14c0-5 2-6 6-6h3v6z" fill="#b3bdca" />
              <path d="M6.500 8.500h9v6h-9z" fill="#fff" stroke="#b3bdca" />
              <path d="M11 10v3" stroke="#b3bdca" />
            </svg>
          </ImeButton>
          <ImeButton type="button" aria-label="皮肤">
            <svg width="14" height="13" viewBox="0 0 14 13" fill="#2272c4"><path d="M4 0c1 2 5 2 6 0l4 2-1.500 4-1.500-.5V13H3V5.500L1.500 6 0 2z" /></svg>
          </ImeButton>
          <ImeButton type="button" aria-label="工具箱">
            <svg width="13" height="13" viewBox="0 0 13 13" fill="#2272c4">
              <path d="M0 0h6v6H0zM0 7h6v6H0zM7 7h6v6H7z" />
              <path d="M8 1h4v4H8z" fill="none" stroke="#2272c4" strokeWidth="1.500" />
            </svg>
          </ImeButton>
        </ImeBar>
      </StatusBar>

      <Taskbar>
        <TaskGroup $gap={0}>
          <TaskButton type="button" aria-label="开始">
            <svg width="16" height="16" viewBox="0 0 16 16" fill="#fff"><path d="M0 2.300l6.500-.9v6.100H0zM7.300 1.300L16 0v7.500H7.300zM0 8.400h6.500v6.200L0 13.700zM7.300 8.400H16V16l-8.700-1.300z" /></svg>
          </TaskButton>
          <TaskButton type="button" aria-label="Cortana">
            <svg width="16" height="16" viewBox="0 0 16 16"><circle cx="8" cy="8" r="6.500" fill="none" stroke="#fff" strokeWidth="2" /></svg>
          </TaskButton>
          <TaskButton type="button" aria-label="任务视图">
            <svg width="16" height="16" viewBox="0 0 16 16" fill="none" stroke="#fff" strokeWidth="1.200">
              <path d="M0 1.500h2M0 14.500h2M1.500 0v3.500h9V0M1.500 16v-3.500h9V16M1.500 5.500h9v5h-9zM14 0v5M14 10.500V16" />
              <path d="M12.500 5.500h3v3h-3z" fill="#fff" stroke="none" />
            </svg>
          </TaskButton>
        </TaskGroup>
        <TaskGroup $gap={1}>
          <TaskButton type="button" aria-label="Chrome">
            <svg width="22" height="22" viewBox="0 0 22 22">
              <circle cx="11" cy="11" r="11" fill="#f8ca3a" />
              <path d="M11 11L1.500 5.500A11 11 0 0120.500 5.500z" fill="#dd4b3e" />
              <path d="M1.500 5.500L6.500 13.500l4.500 3L9.500 21.900A11 11 0 011.500 5.500z" fill="#35a457" />
              <path d="M11 5.500h9.500l-1 1.500h-8z" fill="#dd4b3e" />
              <circle cx="11" cy="11" r="5.300" fill="#f4f6f8" />
              <circle cx="11" cy="11" r="4.200" fill="#4a86e8" />
            </svg>
          </TaskButton>
          <TaskButton type="button" $open aria-label="文件资源管理器">
            <svg width="22" height="19" viewBox="0 0 22 19">
              <path d="M0 1h7l2 2h13v15H0z" fill="#e8bd55" />
              <path d="M0 5h22v13H0z" fill="#fbe397" />
              <path d="M4 19v-6c0-2 1-2.500 2.500-2.500h9c1.500 0 2.500.5 2.500 2.500v6h-3.500v-4h-7v4z" fill="#3ea7df" />
            </svg>
          </TaskButton>
          <TaskButton type="button" $open aria-label="IntelliJ IDEA">
            <svg width="24" height="24" viewBox="0 0 24 24">
              <path d="M2 1l6-1 6 6-2 13-8 4-4-5 3-7z" fill="#e0296b" />
              <path d="M14 2l6-1 4 5v14l-8 4-6-3z" fill="#3159b8" />
              <path d="M2 18l7-3 6 8H6z" fill="#b94ac0" />
              <rect x="4.500" y="4.500" width="15" height="15" fill="#0b0709" />
              <path d="M7 7h4M9 7v5M7 12h4M12.500 7H16v4c0 1.500-2.500 1.500-3.500.5M7 16.500h6" fill="none" stroke="#fff" strokeWidth="1.300" />
            </svg>
          </TaskButton>
          <TaskButton type="button" $open aria-label="傲游浏览器">
            <svg width="24" height="24" viewBox="0 0 24 24">
              <rect width="24" height="24" rx="2" fill="#1593ff" />
              <path d="M4.500 7h13Q20 7 20 9.500V17h-3v-5.500q0-1.500-1.500-1.500h-6Q8 10 8 11.500V17H5z" fill="#fff" />
              <path d="M11 12h3v5h-3z" fill="#fff" />
            </svg>
          </TaskButton>
          <TaskButton type="button" aria-label="录像工具">
            <svg width="22" height="24" viewBox="0 0 22 24">
              <path d="M1 3l9-3 4 4-2 6-4 1z" fill="#555b5c" />
              <path d="M4 8l6-2 2 14-3 4H3z" fill="#272c2d" />
              <circle cx="5" cy="4" r="3" fill="#a1a5a5" />
              <circle cx="5" cy="4" r="1.500" fill="#222" />
              <path d="M12 6l8-1v11l-8-1z" fill="#767f38" stroke="#a6ac65" />
            </svg>
          </TaskButton>
          <TaskButton type="button" $open aria-label="Typora">
            <svg width="22" height="22" viewBox="0 0 22 22">
              <path d="M2 0l18 1 1 19-2 2-17-1-1-3z" fill="#f5f5f5" />
              <text x="11" y="16" textAnchor="middle" fontFamily="Liberation Serif, serif" fontSize="14" fill="#333">T</text>
            </svg>
          </TaskButton>
          <TaskButton type="button" $active aria-label="画图"><PaintIcon size={24} /></TaskButton>
        </TaskGroup>

        <Tray>
          <TrayButton type="button" $first aria-label="搜狗输入法"><SogouLogo size={16} /></TrayButton>
          <TrayButton type="button" aria-label="显示隐藏的图标">
            <svg width="12" height="8" viewBox="0 0 12 8"><path d="M1 7l5-5 5 5" fill="none" stroke="#fff" strokeWidth="1.300" /></svg>
          </TrayButton>
          <TrayButton type="button" aria-label="电源">
            <svg width="16" height="14" viewBox="0 0 16 14" fill="none" stroke="#fff">
              <path d="M1.500 1v2M4.500 1v2M.5 3.500h5V6l-1.500 1.500h-2L.5 6zM3 7.500v3.500h3" />
              <path d="M7 4.500h7.500v6H5.500V8" /><path d="M8 6h5v3H8z" fill="#fff" stroke="none" /><path d="M15.500 6v3" />
            </svg>
          </TrayButton>
          <TrayButton type="button" aria-label="录制">
            <svg width="16" height="16" viewBox="0 0 16 16">
              <path d="M3 3c0-3 5-3 5 0v5L7 15H4L3 8z" fill="#3c4245" stroke="#9ca1a3" />
              <circle cx="5.500" cy="5" r="1.500" fill="#ddd" />
              <path d="M9 6h6v5H9z" fill="#c31420" />
            </svg>
          </TrayButton>
          <TrayButton type="button" aria-label="更新">
            <svg width="16" height="16" viewBox="0 0 16 16">
              <rect width="16" height="16" fill="#6aa347" />
              <circle cx="8" cy="8" r="6.800" fill="none" stroke="#dcebd2" />
              <path d="M8 13V4.500M4.500 8L8 4.500 11.500 8" fill="none" stroke="#fff" strokeWidth="2" />
            </svg>
          </TrayButton>
          <TrayButton type="button" aria-label="音量">
            <svg width="16" height="14" viewBox="0 0 16 14" fill="none" stroke="#fff" strokeWidth="1.100">
              <path d="M.5 5h2.500l3.500-3.500v11L3 9H.5zM8.500 5c1 1 1 3 0 4M10.500 3c2 2 2 6 0 8M12.500 1.500c3 3 3 8 0 11" />
            </svg>
          </TrayButton>
          <TrayButton type="button" aria-label="网络">
            <svg width="16" height="15" viewBox="0 0 16 15" fill="none" stroke="#fff" strokeWidth="1.100">
              <path d="M6 2.500h9.500v8H4.500V7M10 10.500V14M6.500 14h7M.5.500h4v4h-4zM2.500 4.500V12H5" />
            </svg>
          </TrayButton>
          <TrayButton type="button" aria-label="安全卫士">
            <svg width="16" height="16" viewBox="0 0 16 16">
              <circle cx="8" cy="8" r="7.500" fill="#f3d321" />
              <path d="M.5 8C1 2 6 0 11 1.200 6 3 8 6 3 11z" fill="#6db52c" />
              <path d="M8 4.500v7M4.500 8h7" stroke="#167c35" strokeWidth="2.600" />
            </svg>
          </TrayButton>
          <TrayButton type="button">中</TrayButton>
          <Clock type="button">15:04<br />2018/11/22</Clock>
          <Notifications type="button" aria-label="操作中心">
            <svg width="16" height="16" viewBox="0 0 16 16" fill="none" stroke="#fff" strokeWidth="1.200"><path d="M.7 1h14.600v10.500H11.500V15L8 11.500H.7z" /></svg>
          </Notifications>
          <ShowDesktop type="button" aria-label="显示桌面" />
        </Tray>
      </Taskbar>
    </Screen>
  );
}
